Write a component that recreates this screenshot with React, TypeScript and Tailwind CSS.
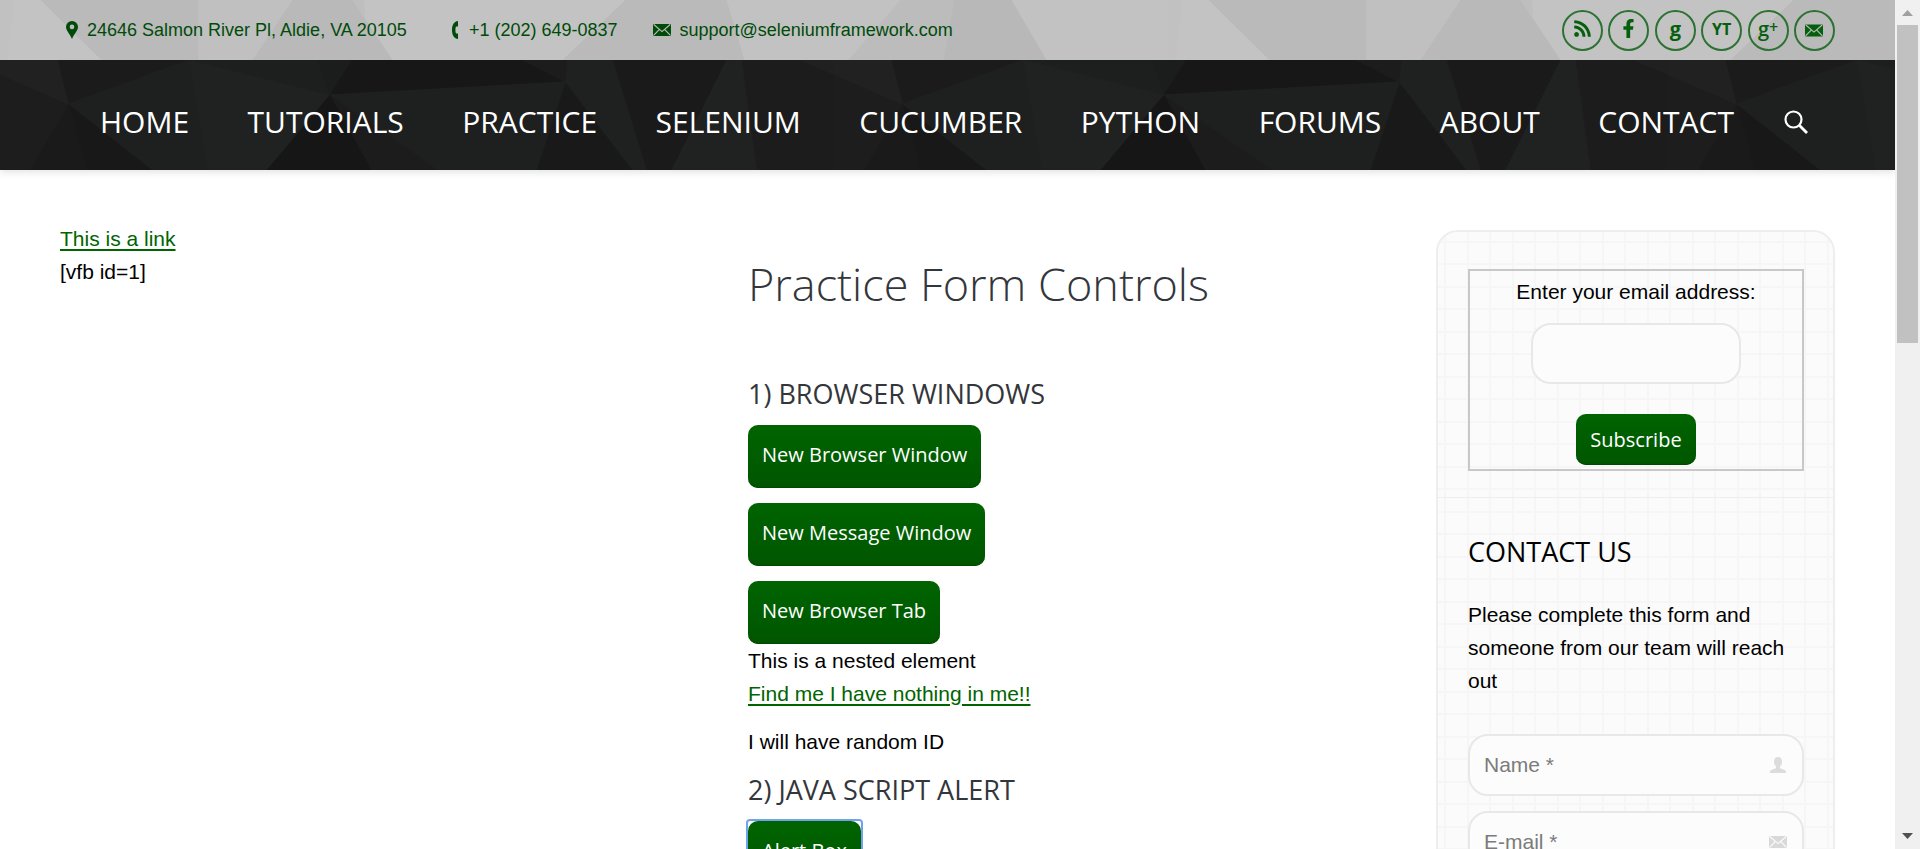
import type { ReactNode } from "react";
import { FaFacebookF, FaRss } from "react-icons/fa";

const SANS = "font-['Liberation_Sans',Arial,sans-serif]";
const OPEN = "font-['Open_Sans',sans-serif]";

const lightFacets: [string, string][] = [
  ["0,0 41,0 102,60 0,60", "#c3c3c3"],
  ["0,0 14,0 7,60 0,60", "#c1c1c1"],
  ["41,0 199,0 199,60 102,60", "#bababa"],
  ["199,0 293,0 253,60 199,60", "#c0c0c0"],
  ["293,0 353,0 393,60 253,60", "#b9b9b9"],
  ["353,0 626,0 563,60 393,60", "#c3c3c3"],
  ["353,0 364,0 364,17", "#bebebe"],
  ["626,0 727,0 745,60 563,60", "#bababa"],
  ["727,0 901,0 849,60 745,60", "#c2c2c2"],
  ["901,0 955,0 944,60 849,60", "#bcbcbc"],
  ["955,0 1012,0 1047,60 944,60", "#b8b8b8"],
  ["1012,0 1168,0 1168,60 1047,60", "#c2c2c2"],
];

const darkFacets: [string, string][] = [
  ["0,14 69,44 30,110 0,110", "#1c1d1c"],
  ["69,44 87,110 30,110", "#1a1a1a"],
  ["69,44 153,110 87,110", "#181818"],
  ["0,0 58,0 69,44 0,14", "#212121"],
  ["58,0 190,0 69,44", "#1a1b1a"],
  ["69,44 190,0 209,110 153,110", "#1e1f1f"],
  ["190,0 330,35 267,110 209,110", "#202222"],
  ["190,0 317,0 330,35", "#1d1e1e"],
  ["317,0 352,0 330,35", "#1b1c1c"],
  ["352,0 523,0 566,22 330,35", "#171717"],
  ["523,0 568,0 566,22", "#1c1c1c"],
  ["330,35 566,22 537,110 438,110", "#1e1f1f"],
  ["330,35 438,110 371,110", "#1b1c1b"],
  ["330,35 371,110 267,110", "#161616"],
  ["566,22 633,110 537,110", "#191919"],
  ["568,0 613,0 647,110 633,110 566,22", "#1f2120"],
  ["613,0 727,0 672,110 647,110", "#1a1a1a"],
  ["727,0 742,0 757,110 672,110", "#202121"],
  ["742,0 801,0 834,14 834,110 757,110", "#1b1c1b"],
  ["801,0 834,0 834,14", "#202020"],
];

interface FacetsProps {
  id: string;
  width: number;
  height: number;
  base: string;
  shapes: [string, string][];
}

function Facets({ id, width, height, base, shapes }: FacetsProps) {
  return (
    <svg className="absolute inset-0 -z-10 h-full w-full" aria-hidden="true">
      <defs>
        <pattern id={id} width={width} height={height} patternUnits="userSpaceOnUse">
          <rect width={width} height={height} fill={base} />
          {shapes.map(([points, fill]) => (
            <polygon key={points} points={points} fill={fill} stroke={fill} strokeWidth="1" />
          ))}
        </pattern>
      </defs>
      <rect width="100%" height="100%" fill={base} />
      <rect width="100%" height="100%" fill={`url(#${id})`} />
    </svg>
  );
}

function Envelope({ className, line }: { className: string; line: string }) {
  return (
    <svg viewBox="0 0 18 12" className={className} aria-hidden="true">
      <rect width="18" height="12" rx="1" fill="currentColor" />
      <path d="M0.8 0.5 L9 7.6 L17.2 0.5 M0.6 11.4 L6.2 5.6 M17.4 11.4 L11.8 5.6" fill="none" stroke={line} strokeWidth="1.1" />
    </svg>
  );
}

function Pin() {
  return (
    <svg viewBox="0 0 12 18" className="h-[18px] w-3" aria-hidden="true">
      <path
        fillRule="evenodd"
        fill="currentColor"
        d="M6 0a6 6 0 0 1 6 6c0 3.6-4 7-6 12C4 13 0 9.600 0 6a6 6 0 0 1 6-6Zm0 3.600a2.300 2.300 0 1 0 0 4.600 2.300 2.300 0 0 0 0-4.600Z"
      />
    </svg>
  );
}

function Phone() {
  return (
    <svg viewBox="0 0 6 18" className="h-[18px] w-[6px]" aria-hidden="true">
      <path fill="currentColor" d="M6 0C2.500 0 0 3.500 0 9s2.500 9 6 9v-5.500H4C3.200 11 3.200 7 4 5.500h2Z" />
    </svg>
  );
}

function Social({ label, children }: { label: string; children: ReactNode }) {
  return (
    <a
      href="#"
      aria-label={label}
      className={`flex size-[41px] items-center justify-center rounded-full border-2 border-[#2c7232] pb-[3px] leading-none font-bold text-[#065f0d] ${OPEN}`}
    >
      {children}
    </a>
  );
}

const menu = ["HOME", "TUTORIALS", "PRACTICE", "SELENIUM", "CUCUMBER", "PYTHON", "FORUMS", "ABOUT", "CONTACT"];

const BUTTON = `rounded-[10px] bg-linear-to-b from-[#006400] to-[#005600] px-[14px] text-xl text-white shadow-[inset_0_-1px_1px_#004a00] ${OPEN}`;
const LINK = "text-[#006400] underline decoration-2 underline-offset-[3px]";

function Header() {
  return (
    <header className="shadow-[0_2px_8px_rgba(0,0,0,0.12)]">
      <div className="relative isolate flex h-[60px] items-center justify-between pr-[60px] pl-[66px] text-lg text-[#004b0a]">
        <Facets id="light" width={1168} height={60} base="#bebebe" shapes={lightFacets} />
        <ul className="flex items-center">
          <li className="mr-[45px] flex items-center gap-[9px]">
            <Pin />
            24646 Salmon River Pl, Aldie, VA 20105
          </li>
          <li className="mr-[35px] flex items-center gap-[11px]">
            <Phone />
            +1 (202) 649-0837
          </li>
          <li className="flex items-center gap-[9px]">
            <Envelope className="h-3 w-[18px]" line="#bdbdbd" />
            <a href="#">support@seleniumframework.com</a>
          </li>
        </ul>
        <div className="flex w-[273px] justify-between">
          <Social label="RSS">
            <FaRss className="size-[19px]" />
          </Social>
          <Social label="Facebook">
            <FaFacebookF className="size-[19px]" />
          </Social>
          <Social label="Google">
            <span className="text-xl leading-none">g</span>
          </Social>
          <Social label="YouTube">
            <span className="text-base leading-none">YT</span>
          </Social>
          <Social label="Google Plus">
            <span className="flex items-start font-semibold">
              <span className="text-xl leading-none">g</span>
              <span className="text-base leading-none">+</span>
            </span>
          </Social>
          <Social label="Mail">
            <Envelope className="mt-[3px] h-[13px] w-[18px]" line="#bdbdbd" />
          </Social>
        </div>
      </div>
      <div className="relative isolate flex h-[110px] items-center pt-[14px] pr-[87px] pl-[100px] text-white">
        <Facets id="dark" width={834} height={110} base="#1c1c1c" shapes={darkFacets} />
        <nav className={`mr-[50px] flex flex-1 justify-between text-3xl ${OPEN}`}>
          {menu.map((item) => (
            <a key={item} href="#">
              {item}
            </a>
          ))}
        </nav>
        <button type="button" aria-label="Search">
          <svg viewBox="0 0 24 24" className="size-6" fill="none" stroke="currentColor">
            <circle cx="9.500" cy="9.500" r="8" strokeWidth="2.200" />
            <path d="M15.500 15.500 L23 23" strokeWidth="2.800" />
          </svg>
        </button>
      </div>
    </header>
  );
}

function Heading({ children }: { children: ReactNode }) {
  return <h2 className={`text-[27px] leading-[34px] text-[#33363b] ${OPEN}`}>{children}</h2>;
}

function Sidebar() {
  const field =
    "h-[62px] w-full rounded-[20px] border-2 border-[#e8e8e8] bg-[#fcfcfc] pr-14 pl-[14px] text-[21px] text-black placeholder:text-[#7b7b7b]";
  return (
    <aside className="mt-2 w-[399px] shrink-0 rounded-[22px] border-2 border-[#eeeeee] bg-[#fbfbfb] bg-[linear-gradient(90deg,transparent_6px,#f6f6f6_6px,#f6f6f6_8px,transparent_8px,transparent_29px,#f6f6f6_29px,#f6f6f6_31px,transparent_31px),linear-gradient(180deg,transparent_9px,#f6f6f6_9px,#f6f6f6_11px,transparent_11px,transparent_31px,#f6f6f6_31px,#f6f6f6_33px,transparent_33px)] bg-size-[45px_45px]">
      <div className="border-b border-[#eeeeee] pt-[37px] pr-[29px] pb-[26px] pl-[30px]">
        <form className="flex flex-col items-center border-2 border-[#c8c8c8] pt-1 pb-1">
          <label htmlFor="subscribe-email">Enter your email address:</label>
          <input
            id="subscribe-email"
            type="email"
            className="mt-[15px] mb-[30px] h-[61px] w-[210px] rounded-[20px] border-2 border-[#e8e8e8] bg-[#fcfcfc] px-4"
          />
          <button type="button" className={`h-[51px] ${BUTTON}`}>
            Subscribe
          </button>
        </form>
      </div>
      <div className="pt-[37px] pr-[29px] pb-10 pl-[30px]">
        <h2 className={`mb-[29px] text-[27px] leading-[34px] ${OPEN}`}>CONTACT US</h2>
        <p className="mb-[37px]">Please complete this form and someone from our team will reach out</p>
        <form className="flex flex-col gap-[15px]">
          <div className="relative">
            <input className={field} type="text" placeholder="Name *" aria-label="Name" />
            <svg viewBox="0 0 16 16" className="absolute top-[23px] right-[18px] size-4 text-[#dcdcdc]" aria-hidden="true">
              <path
                fill="currentColor"
                d="M8 0c2.600 0 4 1.800 4 4.500C12 7 11 8.600 10 9.300v1.900c1.500.700 4.200 1.200 5.300 2.100.500.400.700 1.300.700 2.700H0c0-1.400.200-2.300.700-2.700 1.100-.900 3.800-1.400 5.300-2.100V9.300C5 8.600 4 7 4 4.500 4 1.800 5.400 0 8 0Z"
              />
            </svg>
          </div>
          <div className="relative">
            <input className={field} type="email" placeholder="E-mail *" aria-label="E-mail" />
            <Envelope className="absolute top-[25px] right-[17px] h-3 w-[18px] text-[#d9d9d9]" line="#fcfcfc" />
          </div>
        </form>
      </div>
    </aside>
  );
}

export default function App() {
  return (
    <div className={`flex h-screen overflow-hidden bg-white text-black ${SANS}`}>
      <div className="min-w-0 flex-1 overflow-hidden">
        <Header />
        <main className="flex items-start gap-[60px] px-[60px] pt-[52px] text-[21px] leading-[33px]">
          <section className="flex-1">
            <a href="#" className={LINK}>
              This is a link
            </a>
            <p>[vfb id=1]</p>
          </section>
          <section className="flex-1 pt-8">
            <h1 className={`mb-[63px] text-[45px] leading-[60px] font-light text-[#33363b] ${OPEN}`}>Practice Form Controls</h1>
            <Heading>1) BROWSER WINDOWS</Heading>
            <div className="mt-[14px] flex flex-col items-start gap-[15px]">
              {["New Browser Window", "New Message Window", "New Browser Tab"].map((label) => (
                <button key={label} type="button" className={`h-[63px] pb-1 ${BUTTON}`}>
                  {label}
                </button>
              ))}
            </div>
            <p>This is a nested element</p>
            <a href="#" className={LINK}>
              Find me I have nothing in me!!
            </a>
            <p className="mt-[15px] mb-[15px]">I will have random ID</p>
            <Heading>2) JAVA SCRIPT ALERT</Heading>
            <div className="mt-[14px] inline-flex rounded-[2px] outline-2 outline-[#6ea3f0]">
              <button type="button" className={`h-[63px] pb-1 ${BUTTON}`}>
                Alert Box
              </button>
            </div>
          </section>
          <Sidebar />
        </main>
      </div>
      <div className="flex w-[25px] shrink-0 flex-col items-center bg-[#f0f0f0]" aria-hidden="true">
        <svg viewBox="0 0 21 25" className="h-[25px] w-[21px]">
          <path d="M10.500 10 L16 16 H5Z" fill="#a0a0a0" />
        </svg>
        <div className="h-[318px] w-[21px] bg-[#c1c1c1]" />
        <svg viewBox="0 0 21 25" className="mt-auto h-[25px] w-[21px]">
          <path d="M10.500 15 L16 9 H5Z" fill="#505050" />
        </svg>
      </div>
    </div>
  );
}
